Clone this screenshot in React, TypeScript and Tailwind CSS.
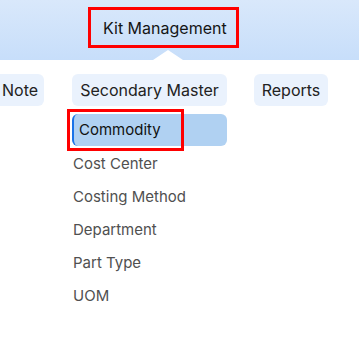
import React from 'react';

const items = ['Cost Center', 'Costing Method', 'Department', 'Part Type', 'UOM'];

export default function App() {
  return (
    <div className="w-[359px] h-[350px] bg-white overflow-hidden" style={{ fontFamily: 'Inter, "Noto Sans", sans-serif' }}>
      {/* top band */}
      <div className="relative h-[60px] bg-gradient-to-b from-[#d9e8fb] to-[#c7defa] pl-[88px] pt-[7px]">
        <div className="w-[151px] h-[41px] border-[3px] border-[#ff0000] flex items-center pl-[12px] text-[16px] text-[#151515]">
          Kit Management
        </div>
        <div className="absolute left-[153px] bottom-0 w-0 h-0 border-l-[15px] border-r-[15px] border-b-[10px] border-l-transparent border-r-transparent border-b-white" />
      </div>

      {/* tabs */}
      <div className="flex items-center mt-[14px] h-[32px]">
        <div className="w-[44px] h-full bg-[#eaf2fd] rounded-r-md flex items-center pl-[2px] text-[16px] text-[#222]">Note</div>
        <div className="ml-[28px] w-[155px] h-full bg-[#eaf2fd] rounded-md flex items-center justify-center text-[16px] text-[#222]">Secondary Master</div>
        <div className="ml-[27px] w-[74px] h-full bg-[#eaf2fd] rounded-md flex items-center justify-center text-[16px] text-[#222]">Reports</div>
      </div>

      {/* dropdown */}
      <div className="relative ml-[72px] mt-[8px] w-[155px] flex flex-col">
        <div className="h-[32px] mb-[2px] bg-[#b0d1f2] rounded-md border-l-2 border-[#1a73e8] flex items-center pl-[5px] text-[15px] text-[#111]">
          Commodity
        </div>
        {items.map((t) => (
          <div key={t} className="h-[33px] flex items-center pl-[1px] text-[15px] text-[#505050]">
            {t}
          </div>
        ))}
        <div className="absolute left-[-5px] top-[-5px] w-[117px] h-[42px] border-[3px] border-[#ff0000]" />
      </div>
    </div>
  );
}
